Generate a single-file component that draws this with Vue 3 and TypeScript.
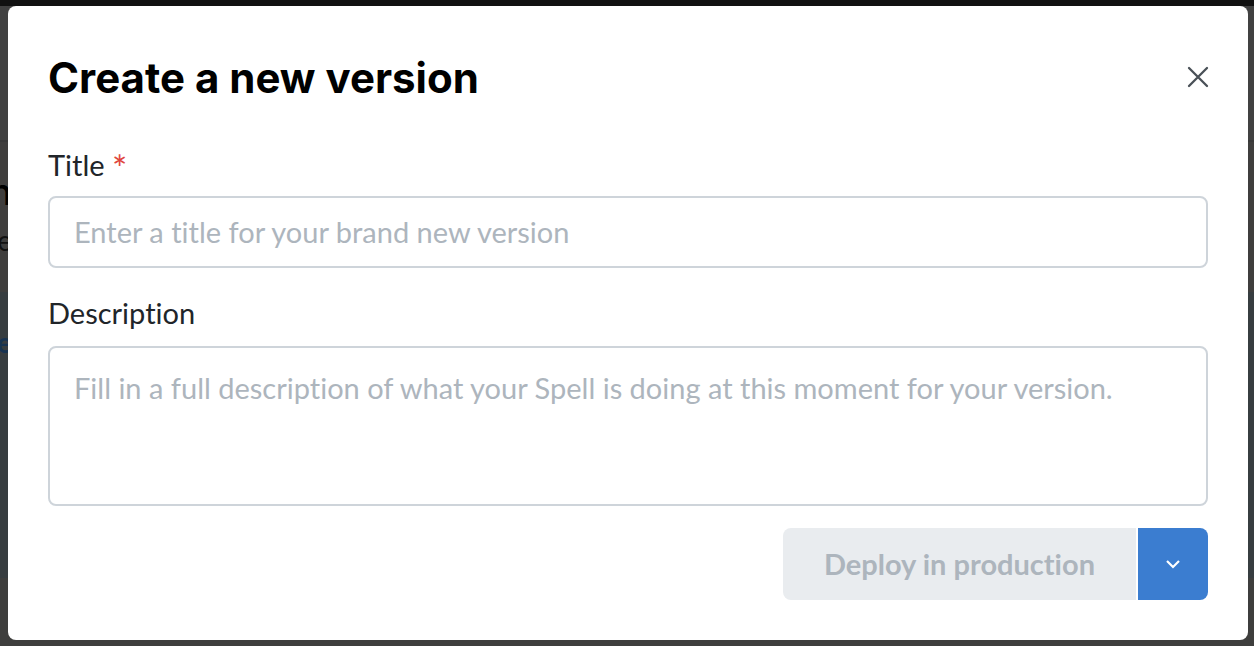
<script setup lang="ts">
import { ref } from 'vue'

const title = ref('')
const description = ref('')
</script>

<template>
  <div class="screen">
    <div class="underlay" aria-hidden="true">
      <div class="bar"></div>
      <div class="toolbar"></div>
      <div class="intro">
        <span class="heading">n</span>
        <span class="sub">pe</span>
      </div>
      <div class="panel"><span class="link">e</span></div>
    </div>

    <form class="modal" role="dialog" aria-labelledby="modal-title" @submit.prevent>
      <header class="header">
        <h1 id="modal-title">Create a new version</h1>
        <button class="close" type="button" aria-label="Close">
          <svg viewBox="0 0 40 40" width="40" height="40" fill="none">
            <path d="M11 10L29 28M29 10L11 28" stroke="#495057" stroke-width="2.3" stroke-linecap="round" />
          </svg>
        </button>
      </header>

      <div class="field">
        <label for="version-title">Title <span class="required">*</span></label>
        <input
          id="version-title"
          v-model="title"
          type="text"
          required
          placeholder="Enter a title for your brand new version"
        />
      </div>

      <div class="field">
        <label for="version-description">Description</label>
        <textarea
          id="version-description"
          v-model="description"
          placeholder="Fill in a full description of what your Spell is doing at this moment for your version."
        ></textarea>
      </div>

      <footer class="actions">
        <button class="deploy" type="submit" disabled>Deploy in production</button>
        <button class="more" type="button" aria-label="More deploy options">
          <svg viewBox="0 0 24 24" width="24" height="24" fill="none">
            <path d="M6 9L12 15L18 9" stroke="#fff" stroke-width="2.2" />
          </svg>
        </button>
      </footer>
    </form>
  </div>
</template>

<style>
body {
  margin: 0;
  background: #3d3d3d;
}
</style>

<style scoped>
.screen {
  position: relative;
  box-sizing: border-box;
  min-height: 100vh;
  padding: 6px 6px 6px 8px;
  overflow: hidden;
  font-family: Lato, "Open Sans", sans-serif;
  font-variant-ligatures: none;
}

.underlay {
  position: absolute;
  inset: 0;
  background: #3e3e3d;
}

.bar {
  height: 6px;
  background: #111;
}

.toolbar {
  height: 134px;
  border-bottom: 2px solid #393939;
  background: #414141;
}

.intro,
.panel {
  display: flex;
  flex-direction: column;
  align-items: flex-start;
  box-sizing: border-box;
}

.intro {
  height: 150px;
  padding-top: 28px;
  background: #3f3e3d;
}

.panel {
  height: 286px;
  padding-top: 30px;
  background: #373d40;
}

.heading,
.sub,
.link {
  display: flex;
  justify-content: flex-end;
  width: 12px;
  line-height: 40px;
}

.heading {
  height: 50px;
  font: 500 36px/44px Inter, sans-serif;
  color: #000;
}

.sub {
  font-size: 28px;
  color: #111;
}

.link {
  font-size: 28px;
  font-weight: 700;
  color: #173351;
}

.modal {
  position: relative;
  box-sizing: border-box;
  padding: 40px;
  border-radius: 8px;
  background: #fff;
}

.header {
  display: flex;
  align-items: center;
  justify-content: space-between;
  height: 64px;
  margin-bottom: 34px;
}

h1 {
  margin: 0;
  font: 700 42px/64px Inter, sans-serif;
  color: #000;
}

button {
  display: flex;
  align-items: center;
  justify-content: center;
  box-sizing: border-box;
  margin: 0;
  padding: 0;
  border: 0;
  font: inherit;
  font-variant-ligatures: none;
}

.close {
  width: 40px;
  height: 40px;
  margin-right: -10px;
  background: none;
}

.field {
  display: flex;
  flex-direction: column;
  gap: 10px;
  margin-bottom: 24px;
}

.field:has(textarea) {
  gap: 12px;
  margin-bottom: 22px;
}

label {
  font-size: 29px;
  font-weight: 400;
  line-height: 42px;
  color: #212529;
}

.required {
  font-size: 36px;
  line-height: 28px;
  vertical-align: -6px;
  color: #e0463e;
}

input,
textarea {
  display: block;
  box-sizing: border-box;
  width: 100%;
  margin: 0;
  border: 2px solid #ced4da;
  border-radius: 8px;
  outline: 0;
  background: #fff;
  font: 400 29px/44px Lato, "Open Sans", sans-serif;
  font-variant-ligatures: none;
  color: #212529;
}

input {
  height: 72px;
  padding: 0 24px 2px;
}

textarea {
  height: 160px;
  padding: 18px 24px;
  resize: none;
}

input::placeholder,
textarea::placeholder {
  color: #adb5bd;
  opacity: 1;
}

.actions {
  display: flex;
  justify-content: flex-end;
  gap: 2px;
}

.deploy {
  height: 72px;
  padding: 0 41px 2px;
  border-radius: 8px 0 0 8px;
  background: #e9ecef;
  font-size: 29px;
  font-weight: 700;
  color: #adb5bd;
}

.more {
  width: 70px;
  height: 72px;
  border-radius: 0 8px 8px 0;
  background: #3b7dd0;
}
</style>
